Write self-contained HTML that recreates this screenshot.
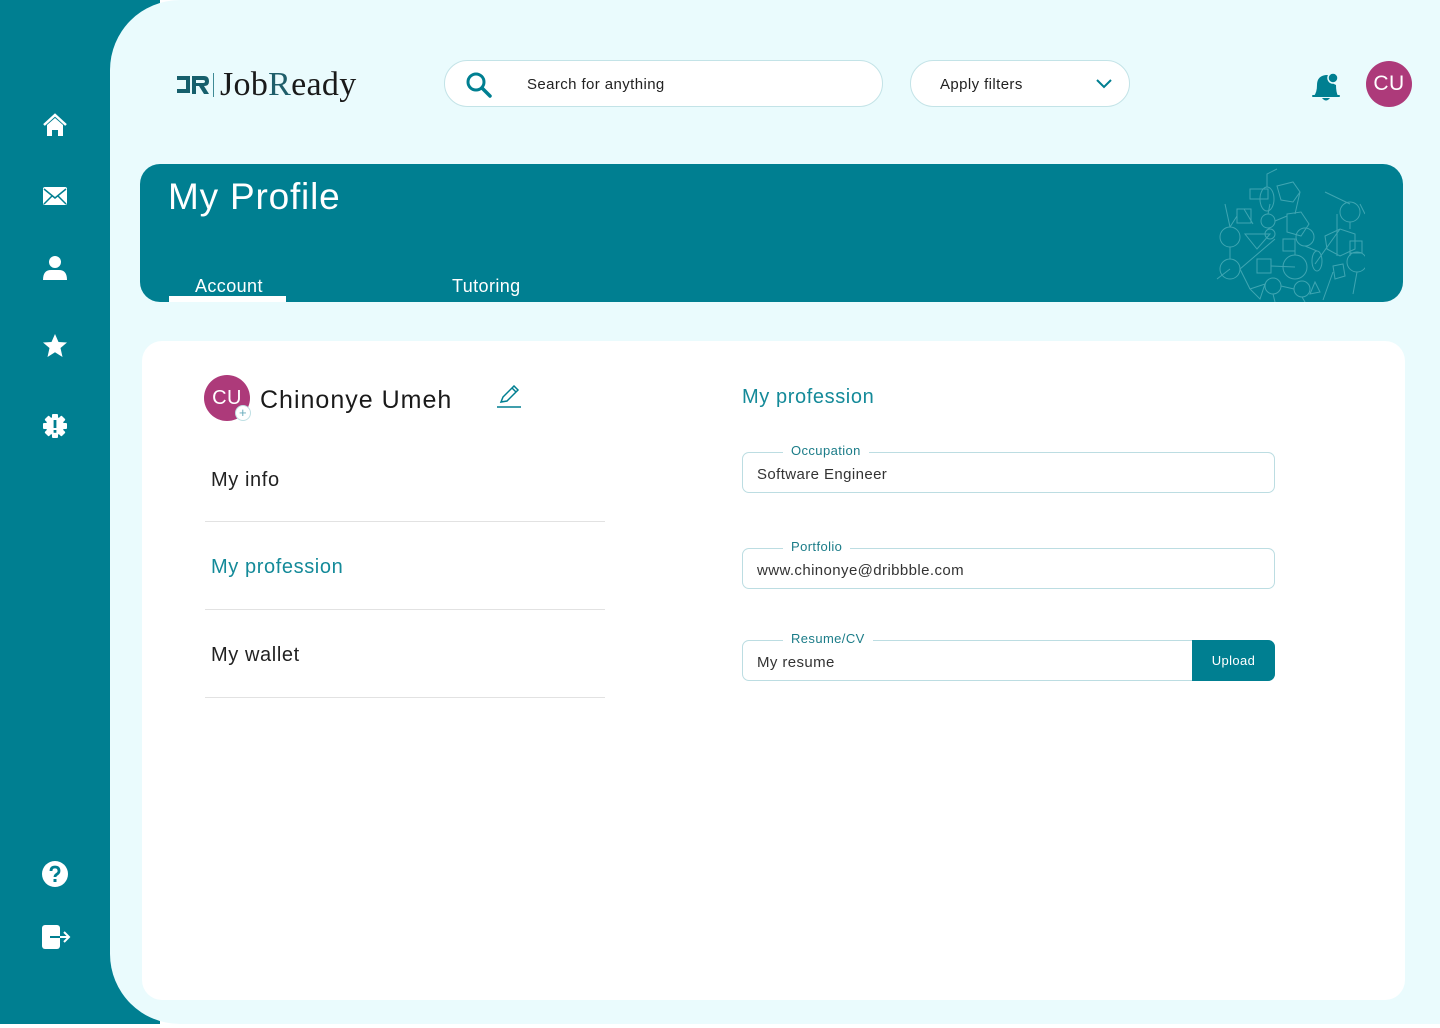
<!DOCTYPE html>
<html><head><meta charset="utf-8"><style>
*{margin:0;padding:0;box-sizing:border-box}
body{width:1440px;height:1028px;background:#fff;font-family:"Liberation Sans",sans-serif;position:relative;overflow:hidden;letter-spacing:0.4px}
.side{position:absolute;left:0;top:0;width:160px;height:1024px;background:#007f91}
.main{position:absolute;left:110px;top:0;width:1330px;height:1024px;background:#eafbfd;border-radius:70px 0 0 70px}
.ic{position:absolute;left:41px;width:28px;height:28px}
.logo{position:absolute;left:176px;top:66px;display:flex;align-items:center}
.logo .t{font-family:"Liberation Serif",serif;font-size:34px;color:#1a1a1a;margin-left:6px;letter-spacing:0.3px}
.search{position:absolute;left:444px;top:60px;width:439px;height:47px;border:1px solid #c3e3e7;border-radius:24px;background:#fff}
.search span{position:absolute;left:82px;top:15px;font-size:15px;color:#222}
.filter{position:absolute;left:910px;top:60px;width:220px;height:47px;border:1px solid #c3e3e7;border-radius:24px;background:#fff}
.filter span{position:absolute;left:29px;top:15px;font-size:15px;color:#222}
.av{position:absolute;left:1366px;top:61px;width:46px;height:46px;border-radius:50%;background:#ad3a7a;color:#fff;font-size:21px;text-align:center;line-height:46px}
.banner{position:absolute;left:140px;top:164px;width:1263px;height:138px;background:#007f91;border-radius:20px;overflow:hidden}
.banner h1{position:absolute;left:28px;top:12px;font-weight:normal;font-size:37px;color:#fff;letter-spacing:0.8px}
.tab{position:absolute;top:112px;font-size:18px;color:#fff}
.card{position:absolute;left:142px;top:341px;width:1263px;height:659px;background:#fff;border-radius:20px}
.cu{position:absolute;left:204px;top:375px;width:46px;height:46px;border-radius:50%;background:#ad3a7a;color:#fff;font-size:20px;text-align:center;line-height:46px}
.plus{position:absolute;left:235px;top:405px;width:16px;height:16px;border-radius:50%;background:#fff;border:1px solid #bfe0e4;color:#6ab;font-size:13px;line-height:13px;text-align:center}
.name{position:absolute;left:260px;top:386px;font-size:25px;color:#1a1a1a;letter-spacing:1px}
.item{position:absolute;left:211px;font-size:20px;color:#222;letter-spacing:0.6px}
.hr{position:absolute;left:205px;width:400px;height:1px;background:#e2e2e2}
.field{position:absolute;left:742px;width:533px;height:41px;border:1.5px solid #bcdde2;border-radius:7px}
.field .lb{position:absolute;left:40px;top:-10px;background:#fff;padding:0 8px;font-size:13px;color:#1b7c88}
.field .v{position:absolute;left:14px;top:13px;font-size:15px;color:#333}
.up{position:absolute;right:-1px;top:-1px;width:83px;height:41px;background:#007f91;border-radius:0 7px 7px 0;color:#fff;font-size:13px;text-align:center;line-height:41px}
</style></head><body>
<div class="side"></div>
<div class="main"></div>

<svg class="ic" style="top:112px" viewBox="0 0 28 28"><path d="M3 13 L14 3 L25 13" fill="none" stroke="#fff" stroke-width="2.5"/><path d="M6 13 L14 6 L22 13 V24 H17 V18 H11 V24 H6Z" fill="#fff"/></svg>
<svg class="ic" style="top:182px" viewBox="0 0 28 28"><rect x="2" y="5" width="24" height="18" rx="2" fill="#fff"/><path d="M3 7 L14 16 L25 7 M3 22 L11 14 M25 22 L17 14" fill="none" stroke="#007f91" stroke-width="1.5"/></svg>
<svg class="ic" style="top:254px" viewBox="0 0 28 28"><circle cx="14" cy="8" r="6" fill="#fff"/><path d="M2 26 Q2 16 10 16 H18 Q26 16 26 26Z" fill="#fff"/></svg>
<svg class="ic" style="top:332px" viewBox="0 0 28 28"><path d="M14 2 L17.5 10 L26 10.5 L19.5 16 L21.5 25 L14 20.2 L6.5 25 L8.5 16 L2 10.5 L10.5 10Z" fill="#fff"/></svg>
<svg class="ic" style="top:412px" viewBox="0 0 28 28"><g fill="#fff"><circle cx="14" cy="14" r="9"/><rect x="11" y="2" width="6" height="24" rx="1"/><rect x="2" y="11" width="24" height="6" rx="1"/><rect x="11" y="2" width="6" height="24" rx="1" transform="rotate(45 14 14)"/><rect x="11" y="2" width="6" height="24" rx="1" transform="rotate(-45 14 14)"/></g><rect x="12.6" y="8" width="2.8" height="8" fill="#007f91"/><rect x="12.6" y="18" width="2.8" height="2.8" fill="#007f91"/></svg>
<svg class="ic" style="top:860px" viewBox="0 0 28 28"><circle cx="14" cy="14" r="13" fill="#fff"/><path d="M10 11 Q10 7 14 7 Q18 7 18 11 Q18 13 15.5 14.5 Q14 15.5 14 17" fill="none" stroke="#007f91" stroke-width="2.8"/><rect x="12.5" y="19" width="3" height="3" fill="#007f91"/></svg>
<svg class="ic" style="top:924px;width:32px" viewBox="0 0 32 28"><rect x="1" y="1" width="18" height="24" rx="3" fill="#fff"/><path d="M9 13 H28 M23 8 L28 13 L23 18" fill="none" stroke="#fff" stroke-width="2"/><path d="M9 13 H19" stroke="#007f91" stroke-width="2"/></svg>

<div class="logo"><svg width="34" height="24" viewBox="0 0 34 24"><path d="M1 3 H14 V20 H1 V16 H10 V7 H1Z" fill="#165f6c"/><path d="M16 3 H28 Q33 3 33 8.5 Q33 13 28 13 L33 21 H28 L23 13 H20 V21 H16Z M20 7 V10 H27 Q29 10 29 8.5 Q29 7 27 7Z" fill="#165f6c"/></svg><div style="width:1px;height:24px;background:#3f8a95;margin-left:3px"></div><div class="t">Job<span style="color:#1f5e6a">R</span>eady</div></div>

<div class="search"><svg style="position:absolute;left:20px;top:10px" width="28" height="28" viewBox="0 0 28 28"><circle cx="11" cy="11" r="8" fill="none" stroke="#007f91" stroke-width="3"/><path d="M17 17 L25 25" stroke="#007f91" stroke-width="3.5" stroke-linecap="round"/></svg><span>Search for anything</span></div>
<div class="filter"><span>Apply filters</span><svg style="position:absolute;left:185px;top:18px" width="16" height="10" viewBox="0 0 16 10"><path d="M1 1 L8 8 L15 1" fill="none" stroke="#007f91" stroke-width="2"/></svg></div>
<svg style="position:absolute;left:1310px;top:70px" width="32" height="34" viewBox="0 0 32 34"><path d="M4 26 Q7 22 7 15 Q7 6 16 5 Q20 5 22 7 Q19 12 26 15 Q26 22 28 26Z" fill="#007f91"/><rect x="2" y="25" width="28" height="2" rx="1" fill="#007f91"/><path d="M12 28 Q16 33 20 28Z" fill="#007f91"/><circle cx="23" cy="8" r="5" fill="#007f91" stroke="#eafbfd" stroke-width="1.5"/></svg>
<div class="av">CU</div>

<div class="banner"><h1>My Profile</h1>
<div class="tab" style="left:55px">Account</div><div style="position:absolute;left:29px;top:132px;width:117px;height:6px;background:#fff"></div>
<div class="tab" style="left:312px">Tutoring</div>
<svg style="position:absolute;left:1075px;top:0" width="150" height="138" viewBox="0 0 150 138" fill="none" stroke="#4fb0bb" stroke-width="1" opacity="0.8">
<ellipse cx="52" cy="35" rx="7" ry="12"/><path d="M62 22 L78 18 L85 28 L78 38 L66 36Z"/><rect x="35" y="25" width="18" height="10"/><circle cx="53" cy="57" r="7"/><circle cx="55" cy="70" r="5"/><rect x="22" y="45" width="14" height="14"/><path d="M72 50 L86 48 L94 60 L86 72 L72 68Z"/><circle cx="135" cy="48" r="10"/><circle cx="15" cy="73" r="10"/><path d="M30 70 L55 70 L42 85Z"/><rect x="68" y="75" width="12" height="12"/><circle cx="90" cy="73" r="9"/><path d="M110 72 L125 65 L140 70 L140 85 L125 92 L112 85Z"/><circle cx="15" cy="105" r="10"/><rect x="42" y="95" width="14" height="14"/><circle cx="80" cy="103" r="12"/><ellipse cx="102" cy="97" rx="5" ry="10"/><rect x="135" y="77" width="12" height="12"/><path d="M118 102 L128 100 L130 112 L120 115Z"/><circle cx="142" cy="98" r="10"/><circle cx="58" cy="122" r="8"/><circle cx="87" cy="125" r="8"/><path d="M35 125 L50 120 L45 135Z"/><path d="M100 118 L105 128 L95 130Z"/>
<path d="M52 23 L52 10 L62 5 M55 40 L53 50 M53 64 L55 65 M38 60 L29 45 M60 57 L72 52 M85 28 L80 50 M15 63 L22 52 M15 83 L15 95 M25 105 L60 75 M56 102 L80 103 M90 82 L102 87 M80 87 L80 91 M135 58 L135 65 M135 92 L135 88 M135 40 L110 28 M125 65 L100 100 M142 108 L138 130 M87 133 L90 138 M58 130 L60 138 M25 105 L35 125 M66 122 L79 125 M2 115 L15 105 M10 40 L15 63 M118 108 L108 136 M150 50 L145 40 M122 50 L122 92"/>
</svg></div>

<div class="card"></div>
<div class="cu">CU</div><div class="plus">+</div>
<div class="name">Chinonye Umeh</div>
<svg style="position:absolute;left:496px;top:385px" width="26" height="24" viewBox="0 0 26 24"><path d="M5 17 L7 12 L18 1 L22 5 L11 16Z M16 3 L20 7" fill="none" stroke="#007f91" stroke-width="1.5"/><path d="M1 22 H25" stroke="#007f91" stroke-width="1.5"/></svg>
<div class="item" style="top:469px">My info</div><div class="hr" style="top:521px"></div>
<div class="item" style="top:556px;color:#148a99">My profession</div><div class="hr" style="top:609px"></div>
<div class="item" style="top:644px">My wallet</div><div class="hr" style="top:697px"></div>

<div style="position:absolute;left:742px;top:386px;font-size:20px;color:#148a99;letter-spacing:0.6px">My profession</div>
<div class="field" style="top:452px"><div class="lb">Occupation</div><div class="v">Software Engineer</div></div>
<div class="field" style="top:548px"><div class="lb">Portfolio</div><div class="v">www.chinonye@dribbble.com</div></div>
<div class="field" style="top:640px"><div class="lb">Resume/CV</div><div class="v">My resume</div><div class="up">Upload</div></div>
</body></html>
